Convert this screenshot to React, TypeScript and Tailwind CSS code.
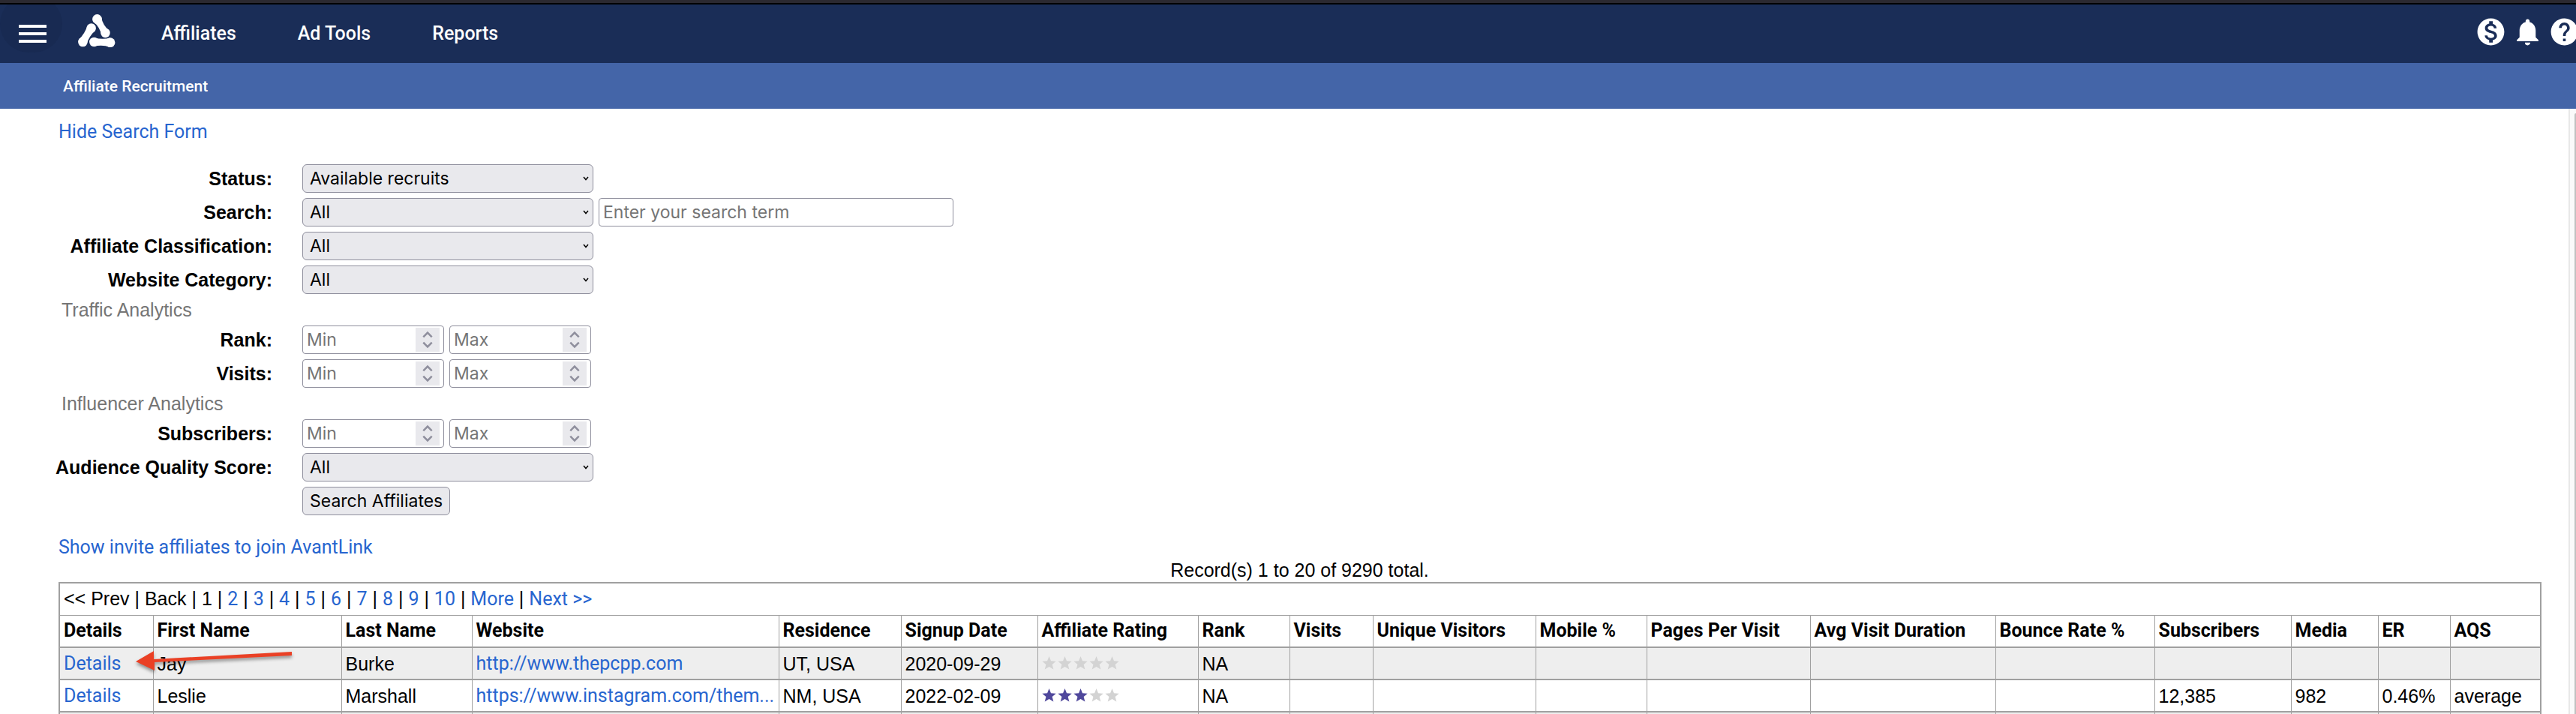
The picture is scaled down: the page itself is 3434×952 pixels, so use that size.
import { MdHelp, MdMonetizationOn, MdNotifications } from "react-icons/md";

const NAV = ["Affiliates", "Ad Tools", "Reports"];
const PAGES = ["2", "3", "4", "5", "6", "7", "8", "9", "10", "More", "Next >>"];

const COLUMNS = [
  { label: "Details", width: "w-[125px]" },
  { label: "First Name", width: "w-[251px]" },
  { label: "Last Name", width: "w-[174px]" },
  { label: "Website", width: "w-[409px]" },
  { label: "Residence", width: "w-[163px]" },
  { label: "Signup Date", width: "w-[182px]" },
  { label: "Affiliate Rating", width: "w-[214px]" },
  { label: "Rank", width: "w-[122px]" },
  { label: "Visits", width: "w-[111px]" },
  { label: "Unique Visitors", width: "w-[217px]" },
  { label: "Mobile %", width: "w-[148px]" },
  { label: "Pages Per Visit", width: "w-[218px]" },
  { label: "Avg Visit Duration", width: "w-[247px]" },
  { label: "Bounce Rate %", width: "w-[212px]" },
  { label: "Subscribers", width: "w-[182px]" },
  { label: "Media", width: "w-[116px]" },
  { label: "ER", width: "w-[96px]" },
  { label: "AQS", width: "w-[121px]" },
];

const ROWS = [
  {
    first: "Jay",
    last: "Burke",
    site: "http://www.thepcpp.com",
    residence: "UT, USA",
    signup: "2020-09-29",
    rating: 0,
    rank: "NA",
    stats: ["", "", "", "", "", "", "", "", "", ""],
  },
  {
    first: "Leslie",
    last: "Marshall",
    site: "https://www.instagram.com/them...",
    residence: "NM, USA",
    signup: "2022-02-09",
    rating: 3,
    rank: "NA",
    stats: ["", "", "", "", "", "", "12,385", "982", "0.46%", "average"],
  },
];

function Logo() {
  return (
    <svg width="50" height="45" viewBox="0 0 50 45" fill="#fff" aria-hidden="true">
      <circle cx="25.5" cy="6.5" r="6.4" />
      <circle cx="36.5" cy="25" r="6.2" />
      <path d="M31 3.400Q32.700 14.400 41.900 22L31.300 28Q29.300 17.100 20.300 9.700Z" />
      <circle cx="17.7" cy="18.5" r="6.2" />
      <circle cx="6.4" cy="37" r="6.3" />
      <path d="M22.900 21.700Q14.500 29.500 11.300 40.200L.900 33.800Q9.100 26.200 12.500 15.300Z" />
      <circle cx="21.3" cy="37" r="6.2" />
      <circle cx="43" cy="37.7" r="6.4" />
      <path d="M21.500 30.900Q32 34.400 43 31.400V44Q32 40.200 21 43.100Z" />
    </svg>
  );
}

function Link({ children, className = "" }: { children: React.ReactNode; className?: string }) {
  return (
    <a href="#" className={`font-['Roboto',sans-serif] text-[#2765cf] ${className}`}>
      {children}
    </a>
  );
}

function Select({ id, value }: { id: string; value: string }) {
  return (
    <div className="relative w-[388px]">
      <select
        id={id}
        className="block h-[38px] w-full appearance-none rounded-md border border-[#8f8f9d] bg-[#e9e9ed] px-[9px] font-['Inter',sans-serif] text-[23px] leading-8"
      >
        <option>{value}</option>
      </select>
      <svg
        className="pointer-events-none absolute top-4 right-1.5"
        width="8"
        height="6"
        viewBox="0 0 8 6"
        fill="none"
        stroke="#000"
        strokeWidth="1.5"
        aria-hidden="true"
      >
        <path d="M1 1l3 3.500L7 1" />
      </svg>
    </div>
  );
}

function NumberField({ id, placeholder, label }: { id?: string; placeholder: string; label: string }) {
  return (
    <div className="relative w-[189px]">
      <input
        id={id}
        type="number"
        aria-label={label}
        placeholder={placeholder}
        className="block h-[38px] w-full appearance-none rounded-sm border border-[#8f8f9d] bg-white px-[5px] font-['Inter',sans-serif] text-[23px] leading-8 [appearance:textfield] placeholder:text-[#757575] [&::-webkit-inner-spin-button]:appearance-none"
      />
      <div className="pointer-events-none absolute inset-y-[3px] right-1.5 flex w-8 items-center justify-center bg-[#e9e9ed]">
        <svg width="14" height="24" viewBox="0 0 14 24" fill="none" stroke="#8f8f9d" strokeWidth="2.5" aria-hidden="true">
          <path d="M1.300 8.300L7 2.500l5.700 5.800M1.300 15.700L7 21.500l5.700-5.800" />
        </svg>
      </div>
    </div>
  );
}

function FormRow({ label, id, children }: { label: string; id: string; children: React.ReactNode }) {
  return (
    <div className="flex items-center">
      <label htmlFor={id} className="flex w-[285px] justify-end font-bold whitespace-nowrap">
        {label}
      </label>
      <div className="ml-10 flex gap-[7px]">{children}</div>
    </div>
  );
}

function Range({ id, name }: { id: string; name: string }) {
  return (
    <>
      <NumberField id={id} placeholder="Min" label={`${name} min`} />
      <NumberField placeholder="Max" label={`${name} max`} />
    </>
  );
}

function Stars({ rating }: { rating: number }) {
  return (
    <div className="flex" role="img" aria-label={`${rating} of 5 stars`}>
      {[0, 1, 2, 3, 4].map((i) => (
        <svg key={i} width="21" height="21" viewBox="0 0 22 22" fill={i < rating ? "#50489c" : "#d3d3d3"}>
          <path d="M10 1l2.600 6.500 7 .500-5.300 4.500 1.800 7L10 15.700 3.900 19.500l1.800-7L.400 8l7-.500z" />
        </svg>
      ))}
    </div>
  );
}

function Arrow() {
  return (
    <svg
      className="pointer-events-none absolute top-0 left-[101px] drop-shadow-[0_3px_2px_rgba(0,0,0,0.4)]"
      width="212"
      height="40"
      viewBox="0 0 212 40"
      aria-hidden="true"
    >
      <path d="M0 18L24 4V15L208 5V10L25 19V30Z" fill="#ea4025" />
    </svg>
  );
}

export default function App() {
  return (
    <div className="flex h-screen flex-col overflow-hidden bg-white font-['Liberation_Sans',sans-serif] text-[25px] leading-7 text-black">
      <header className="shrink-0 font-['Roboto',sans-serif] font-medium text-white">
        <div className="h-1.5 border-b-2 border-black bg-[#2b2930]" />
        <div className="relative flex h-[78px] items-center overflow-hidden bg-[#1a2d57]">
          <span className="absolute -top-3 left-0 h-[76px] w-[83px] rounded-full bg-[#182a52]" />
          <button type="button" aria-label="Menu" className="relative ml-[25px] flex w-[37px] flex-col gap-1.5">
            <span className="h-1 w-full bg-white" />
            <span className="h-1 w-full bg-white" />
            <span className="h-1 w-full bg-white" />
          </button>
          <a href="#" aria-label="Home" className="ml-[42px] pb-2">
            <Logo />
          </a>
          <nav className="ml-[61px] flex gap-[82px]">
            {NAV.map((item) => (
              <a key={item} href="#">
                {item}
              </a>
            ))}
          </nav>
          <div className="-mr-1.5 ml-auto flex gap-1.5 pb-1.5">
            <button type="button" aria-label="Payments">
              <MdMonetizationOn size={43} />
            </button>
            <button type="button" aria-label="Notifications">
              <MdNotifications size={43} />
            </button>
            <button type="button" aria-label="Help">
              <MdHelp size={43} />
            </button>
          </div>
        </div>
        <div className="flex h-[61px] items-center bg-[#4465a8] pl-[84px] text-[21px]">
          <h1>Affiliate Recruitment</h1>
        </div>
      </header>

      <div className="flex min-h-0 flex-1">
        <main className="min-w-0 flex-1 overflow-hidden pt-[17px] pr-[37px] pl-[78px]">
          <Link className="block">Hide Search Form</Link>

          <form className="mt-[29px] flex flex-col gap-[7px]">
            <FormRow label="Status:" id="status">
              <Select id="status" value="Available recruits" />
            </FormRow>
            <FormRow label="Search:" id="search">
              <Select id="search" value="All" />
              <input
                type="text"
                aria-label="Search term"
                placeholder="Enter your search term"
                className="h-[38px] w-[473px] rounded-sm border border-[#8f8f9d] px-[5px] font-['Inter',sans-serif] text-[23px] leading-8 placeholder:text-[#757575]"
              />
            </FormRow>
            <FormRow label="Affiliate Classification:" id="classification">
              <Select id="classification" value="All" />
            </FormRow>
            <FormRow label="Website Category:" id="category">
              <Select id="category" value="All" />
            </FormRow>
            <p className="pl-1 text-[#757575]">Traffic Analytics</p>
            <FormRow label="Rank:" id="rank">
              <Range id="rank" name="Rank" />
            </FormRow>
            <FormRow label="Visits:" id="visits">
              <Range id="visits" name="Visits" />
            </FormRow>
            <p className="pl-1 text-[#757575]">Influencer Analytics</p>
            <FormRow label="Subscribers:" id="subscribers">
              <Range id="subscribers" name="Subscribers" />
            </FormRow>
            <FormRow label="Audience Quality Score:" id="aqs">
              <Select id="aqs" value="All" />
            </FormRow>
            <button
              type="submit"
              className="ml-[325px] h-[38px] self-start rounded-md border border-[#8f8f9d] bg-[#e9e9ed] px-[9px] font-['Inter',sans-serif] text-[23px] leading-8"
            >
              Search Affiliates
            </button>
          </form>

          <Link className="mt-[29px] block">Show invite affiliates to join AvantLink</Link>

          <p className="my-0.5 text-center">Record(s) 1 to 20 of 9290 total.</p>
          <table className="w-full table-fixed border-collapse border-2 border-[#a0a0a0] text-left">
            <colgroup>
              {COLUMNS.map((c) => (
                <col key={c.label} className={c.width} />
              ))}
            </colgroup>
            <thead>
              <tr>
                <td colSpan={18} className="h-[43px] px-[5px] whitespace-pre">
                  {"<< Prev | Back | 1"}
                  {PAGES.map((p) => (
                    <span key={p}>
                      {" | "}
                      <Link>{p}</Link>
                    </span>
                  ))}
                </td>
              </tr>
              <tr className="font-['Roboto',sans-serif]">
                {COLUMNS.map((c) => (
                  <th key={c.label} scope="col" className="h-[43px] border border-[#a0a0a0] px-[5px] font-bold whitespace-nowrap">
                    {c.label}
                  </th>
                ))}
              </tr>
            </thead>
            <tbody className="[&_td]:h-[43px] [&_td]:border-x [&_td]:border-y-2 [&_td]:border-[#a0a0a0] [&_td]:px-[5px] [&_td]:whitespace-nowrap [&_tr]:odd:bg-[#eeeeee]">
              {ROWS.map((row, i) => (
                <tr key={row.first}>
                  <td className="relative">
                    <Link>Details</Link>
                    {i === 0 && <Arrow />}
                  </td>
                  <td>{row.first}</td>
                  <td>{row.last}</td>
                  <td>
                    <Link>{row.site}</Link>
                  </td>
                  <td>{row.residence}</td>
                  <td>{row.signup}</td>
                  <td>
                    <Stars rating={row.rating} />
                  </td>
                  <td>{row.rank}</td>
                  {row.stats.map((s, j) => (
                    <td key={j}>{s}</td>
                  ))}
                </tr>
              ))}
              <tr>
                {COLUMNS.map((c) => (
                  <td key={c.label} />
                ))}
              </tr>
            </tbody>
          </table>
        </main>
        <div className="w-2.5 shrink-0 border-l-2 border-[#e8e8e8] bg-[#fafafa] pt-1.5" aria-hidden="true">
          <div className="ml-auto h-full w-0.5 rounded-tl-sm bg-[#c1c1c1]" />
        </div>
      </div>
    </div>
  );
}
